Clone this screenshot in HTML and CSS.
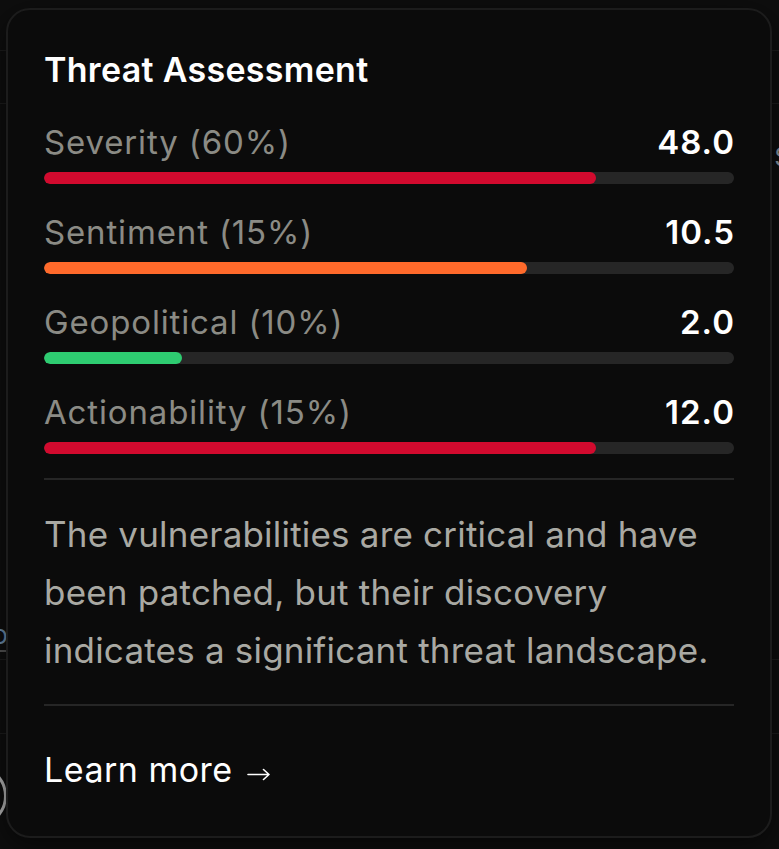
FILE: index.html
```html
<!DOCTYPE html>
<html lang="en">
<head>
<meta charset="utf-8">
<title>Threat Assessment</title>
<link rel="stylesheet" href="styles.css">
</head>
<body>
<div class="backdrop">
  <div class="bg-row bg-row-a"></div>
  <div class="bg-row bg-row-b"></div>
  <div class="bg-row bg-row-c"><span class="bg-glyph-right">S</span><span class="bg-glyph-left">lo</span></div>
  <div class="bg-row bg-row-d"></div>
  <div class="bg-row bg-row-e"><span class="bg-ring"></span></div>
</div>
<div class="card">
  <h2 class="title">Threat Assessment</h2>
  <div class="metrics">
    <div class="metric">
      <div class="metric-head"><span class="label">Severity (60%)</span><span class="value">48.0</span></div>
      <div class="track"><div class="fill red" style="width:80%"></div></div>
    </div>
    <div class="metric">
      <div class="metric-head"><span class="label">Sentiment (15%)</span><span class="value">10.5</span></div>
      <div class="track"><div class="fill orange" style="width:70%"></div></div>
    </div>
    <div class="metric">
      <div class="metric-head"><span class="label">Geopolitical (10%)</span><span class="value">2.0</span></div>
      <div class="track"><div class="fill green" style="width:20%"></div></div>
    </div>
    <div class="metric">
      <div class="metric-head"><span class="label">Actionability (15%)</span><span class="value">12.0</span></div>
      <div class="track"><div class="fill red" style="width:80%"></div></div>
    </div>
  </div>
  <p class="summary">The vulnerabilities are critical and have been patched, but their discovery indicates a significant threat landscape.</p>
  <a class="learn" href="#">Learn more<svg class="arrow" width="24" height="14" viewBox="0 0 24 14" aria-hidden="true"><path d="M1 7.5H22M16.5 2.5L22 7.5L16.5 12.5" fill="none" stroke="#ffffff" stroke-width="1.6" stroke-linecap="round" stroke-linejoin="round"/></svg></a>
</div>
</body>
</html>
```
FILE: styles.css
```css
html, body {
  margin: 0;
  padding: 0;
  background: #0e0e0e;
  width: 779px;
  height: 849px;
  overflow: hidden;
  font-family: Inter, "Liberation Sans", sans-serif;
}
.backdrop {
  display: flex;
  flex-direction: column;
  height: 849px;
}
.bg-row {
  border-bottom: 1px solid #1d1d1d;
  position: relative;
}
.bg-row-a { height: 50px; }
.bg-row-b { height: 52px; }
.bg-row-c { height: 555px; }
.bg-row-d { height: 73px; }
.bg-row-e { flex: 1; border-bottom: none; }
.bg-glyph-right {
  position: absolute;
  right: -12px;
  top: 38px;
  color: #8f9aa6;
  font-size: 26px;
  line-height: 30px;
}
.bg-glyph-left {
  position: absolute;
  left: -14px;
  top: 516px;
  color: #6d8fb0;
  font-size: 26px;
  line-height: 30px;
  border-bottom: 2px solid #555;
}
.bg-ring {
  position: absolute;
  left: -55px;
  top: 31px;
  width: 56px;
  height: 56px;
  border: 3px solid #b8b8b8;
  border-radius: 50%;
}
.card {
  position: absolute;
  left: 6px;
  top: 8px;
  width: 762px;
  height: 826px;
  box-sizing: content-box;
  border: 2px solid #1c1c1c;
  border-radius: 24px;
  background: #0b0b0b;
  box-shadow: 0 8px 30px rgba(0,0,0,0.6);
}
.title {
  margin: 40px 36px 0 36px;
  font-size: 34px;
  line-height: 40px;
  font-weight: 600;
  color: #ffffff;
  letter-spacing: 0.3px;
}
.metrics {
  margin: 32px 36px 0 36px;
  display: flex;
  flex-direction: column;
  gap: 28px;
}
.metric {
  display: flex;
  flex-direction: column;
  gap: 10px;
}
.metric-head {
  display: flex;
  justify-content: space-between;
  align-items: center;
  height: 40px;
  line-height: 40px;
}
.label {
  font-size: 33px;
  letter-spacing: 0.85px;
  color: #8b8b85;
}
.value {
  font-size: 33px;
  font-weight: 600;
  letter-spacing: 1px;
  margin-right: -1px;
  color: #ffffff;
}
.track {
  height: 12px;
  border-radius: 6px;
  background: #262626;
  overflow: hidden;
}
.fill {
  height: 100%;
  border-radius: 6px;
}
.red { background: #d20a2e; }
.orange { background: #ff6a2b; }
.green { background: #2ecc71; }
.summary {
  margin: 24px 36px 0 36px;
  padding: 25px 0 25px 0;
  border-top: 2px solid #262626;
  border-bottom: 2px solid #262626;
  font-size: 35px;
  letter-spacing: 0.2px;
  line-height: 58px;
  color: #a9a9a3;
}
.learn {
  display: flex;
  align-items: center;
  gap: 14px;
  margin: 44px 36px 0 36px;
  font-size: 34px;
  letter-spacing: 0.5px;
  line-height: 40px;
  color: #ffffff;
  text-decoration: none;
}
.arrow {
  margin-top: 8px;
}
```
